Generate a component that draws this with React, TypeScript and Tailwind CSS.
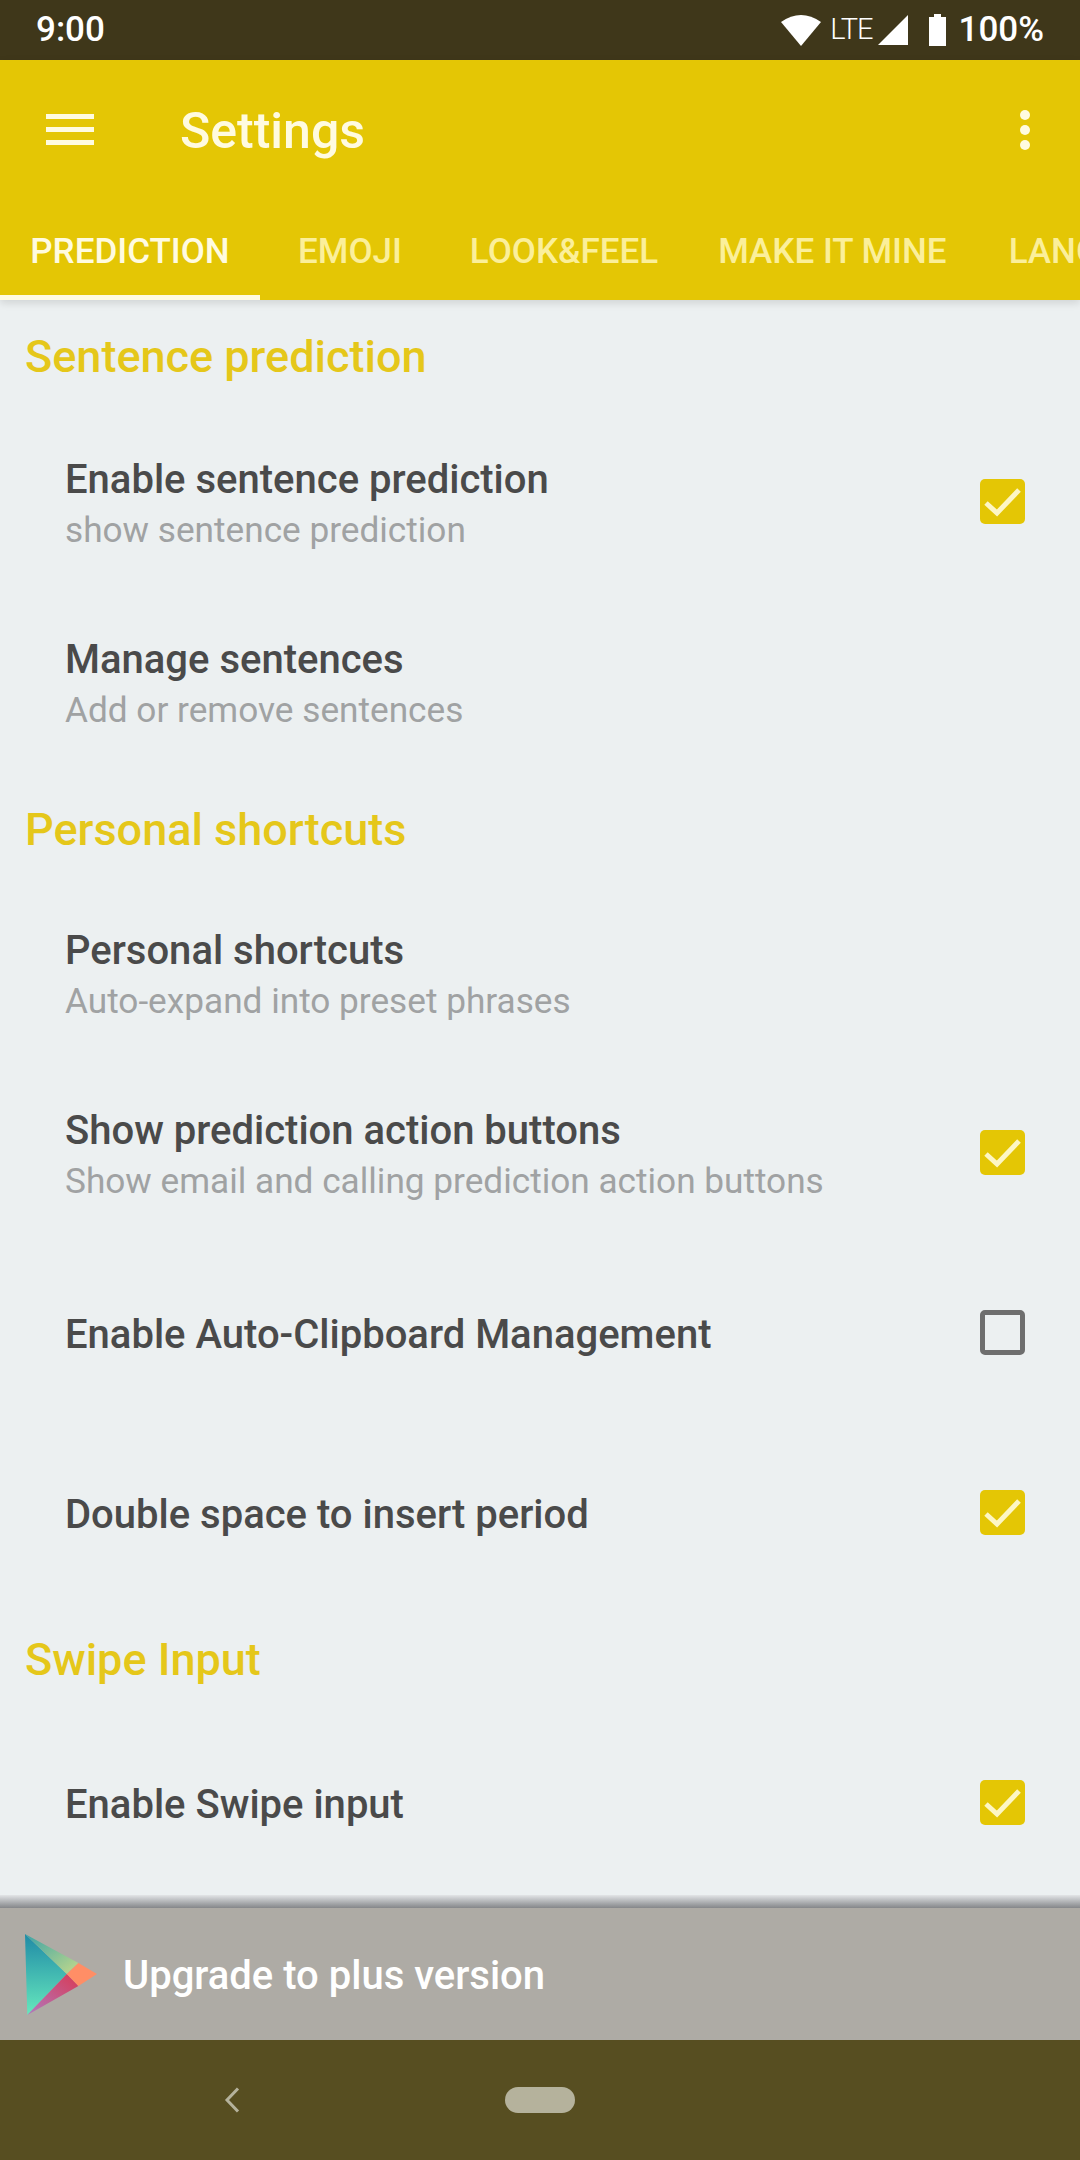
import type { ReactNode } from 'react'

// 勾选框：选中为黄底白勾，未选中为灰色描边
function Checkbox({ checked }: { checked: boolean }) {
  if (!checked) {
    return <div className="w-[45px] h-[45px] mb-[6px] rounded-[5px] border-[5px] border-[#6e6e6e] shrink-0" />
  }
  return (
    <div className="w-[45px] h-[45px] mb-[6px] rounded-[5px] bg-[#e4c605] shrink-0">
      <svg width="45" height="45" viewBox="0 0 45 45" fill="none">
        <path d="M6 24 L17 34 L39 11" stroke="#fdf6c4" strokeWidth="5" />
      </svg>
    </div>
  )
}

function Row({ title, sub, checked }: { title: string; sub?: string; checked?: boolean }) {
  return (
    <div className="h-[180px] pl-[65px] pr-[55px] flex items-center justify-between">
      <div className="flex flex-col">
        <span className="text-[40px] leading-[48px] font-medium text-[#4a4a4a]">{title}</span>
        {sub && <span className="text-[35.2px] leading-[44px] mt-[4px] mb-[1px] text-[#a0a2a3]">{sub}</span>}
      </div>
      {checked !== undefined && <Checkbox checked={checked} />}
    </div>
  )
}

function Header({ className, children }: { className: string; children: ReactNode }) {
  return (
    <div className={`${className} pl-[25px] flex items-center text-[45px] font-medium text-[#e5c71a]`}>
      {children}
    </div>
  )
}

function StatusBar() {
  return (
    <div className="h-[60px] bg-[#3f371a] shrink-0 flex items-center justify-between pl-[36px] pr-[36px] text-white">
      <span className="text-[35px] font-medium pt-[1px]">9:00</span>
      <div className="flex items-center">
        <svg width="40" height="32" viewBox="0 0 40 32" fill="white">
          <path d="M0 8 Q20 -6 40 8 L20 32 Z" />
        </svg>
        <span className="text-[29px] ml-[9px] font-light tracking-[-1px]">LTE</span>
        <svg width="30" height="30" viewBox="0 0 30 30" fill="white" className="ml-[5px]">
          <path d="M0 30 L30 0 L30 30 Z" />
        </svg>
        <svg width="17" height="32" viewBox="0 0 17 32" fill="white" className="ml-[21px]">
          <path d="M5 0 H12 V3 H17 V32 H0 V3 H5 Z" />
        </svg>
        <span className="text-[35px] ml-[13px] font-medium pt-[1px]">100%</span>
      </div>
    </div>
  )
}

function AppBar() {
  return (
    <div className="h-[240px] bg-[#e4c605] shrink-0 flex flex-col shadow-[0_3px_8px_rgba(0,0,0,0.12)] relative z-10">
      <div className="h-[142px] flex items-center pl-[46px] pr-[50px]">
        <div className="w-[48px] mb-[3px] flex flex-col gap-[8px]">
          <div className="h-[5px] bg-[#fffbe0]" />
          <div className="h-[5px] bg-[#fffbe0]" />
          <div className="h-[5px] bg-[#fffbe0]" />
        </div>
        <span className="ml-[86px] text-[50px] font-medium text-[#fffbe0]">Settings</span>
        <div className="ml-auto mb-[2px] flex flex-col gap-[5px]">
          <div className="w-[10px] h-[10px] rounded-full bg-[#fffbe0]" />
          <div className="w-[10px] h-[10px] rounded-full bg-[#fffbe0]" />
          <div className="w-[10px] h-[10px] rounded-full bg-[#fffbe0]" />
        </div>
      </div>
      <div className="flex-1 flex text-[35px] font-medium text-[#fbef9a] overflow-hidden whitespace-nowrap">
        <div className="w-[260px] shrink-0 flex items-center justify-center text-[#fffbe0] border-b-[5px] border-[#fffbe0] pt-[7px]">PREDICTION</div>
        <div className="ml-[38px] pt-[2px] flex items-center">EMOJI</div>
        <div className="ml-[68px] pt-[2px] flex items-center">LOOK&amp;FEEL</div>
        <div className="ml-[60px] pt-[2px] flex items-center">MAKE IT MINE</div>
        <div className="ml-[62px] pt-[2px] flex items-center">LANGUAGES</div>
      </div>
    </div>
  )
}

function PlayLogo() {
  return (
    <svg width="72" height="81" viewBox="0 0 62 81" preserveAspectRatio="none">
      <defs>
        <linearGradient id="playMain" x1="0" y1="0" x2="0" y2="1">
          <stop offset="0" stopColor="#1f8aa6" />
          <stop offset="1" stopColor="#66e8bd" />
        </linearGradient>
        <linearGradient id="playTop" x1="0" y1="0" x2="1" y2="1">
          <stop offset="0" stopColor="#3aa3a6" />
          <stop offset="1" stopColor="#c3d98b" />
        </linearGradient>
        <linearGradient id="playBottom" x1="0" y1="1" x2="1" y2="0">
          <stop offset="0" stopColor="#b07ac0" />
          <stop offset="1" stopColor="#d83a55" />
        </linearGradient>
      </defs>
      <path d="M0 0 L36 40 L2 81 Z" fill="url(#playMain)" />
      <path d="M0 0 L46 29 L36 40 Z" fill="url(#playTop)" />
      <path d="M2 81 L36 40 L46 52 Z" fill="url(#playBottom)" />
      <path d="M46 29 L62 40 L46 52 L36 40 Z" fill="#ff8e66" />
    </svg>
  )
}

export default function App() {
  return (
    <div className="w-[1080px] h-[2160px] flex flex-col overflow-hidden bg-[#ecf0f1] font-['Roboto',sans-serif]">
      <StatusBar />
      <AppBar />

      <div className="flex-1 flex flex-col overflow-hidden">
        <Header className="h-[114px]">Sentence prediction</Header>
        <Row title="Enable sentence prediction" sub="show sentence prediction" checked />
        <Row title="Manage sentences" sub="Add or remove sentences" />

        <Header className="h-[111px]">Personal shortcuts</Header>
        <Row title="Personal shortcuts" sub="Auto-expand into preset phrases" />
        <Row title="Show prediction action buttons" sub="Show email and calling prediction action buttons" checked />
        <Row title="Enable Auto-Clipboard Management" checked={false} />
        <Row title="Double space to insert period" checked />

        <Header className="h-[110px]">Swipe Input</Header>
        <Row title="Enable Swipe input" checked />
      </div>

      {/* 底部升级横幅 */}
      <div className="h-[13px] shrink-0 bg-gradient-to-b from-[#e3e5e7] to-[#85878a]" />
      <div className="h-[132px] shrink-0 bg-[#aeaba5] flex items-center pl-[25px]">
        <PlayLogo />
        <span className="ml-[26px] pt-[3px] text-[40px] font-medium text-white">Upgrade to plus version</span>
      </div>

      <div className="h-[120px] shrink-0 bg-[#574e21] flex items-center pl-[224px]">
        <svg width="16" height="26" viewBox="0 0 16 26" fill="none">
          <path d="M14 1.5 L3 13 L14 24.5" stroke="#b5b29c" strokeWidth="3" />
        </svg>
        <div className="ml-[265px] w-[70px] h-[26px] rounded-full bg-[#b5b29c]" />
      </div>
    </div>
  )
}
